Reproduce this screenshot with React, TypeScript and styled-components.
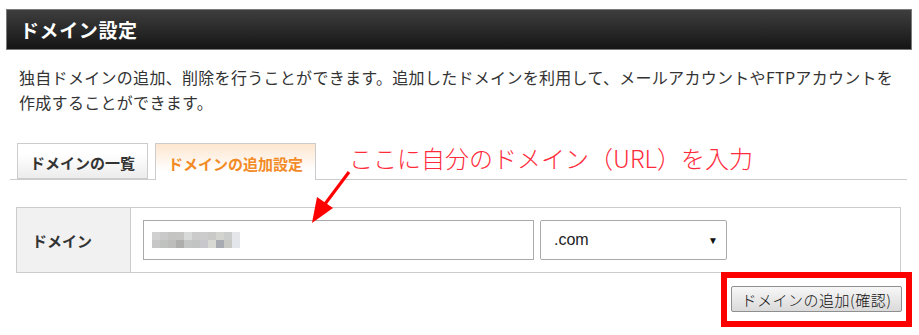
import styled, { createGlobalStyle } from "styled-components";

const GlobalStyle = createGlobalStyle`
  html, body {
    margin: 0;
    padding: 0;
    background: #fff;
  }
  body {
    font-family: "Noto Sans CJK JP", "Noto Sans", sans-serif;
    color: #333;
  }
`;

const Page = styled.div`
  position: relative;
  width: 919px;
  height: 335px;
  padding-top: 9px;
  box-sizing: border-box;
  overflow: hidden;
`;

const Header = styled.div`
  margin: 0 7px 0 6px;
  height: 41px;
  box-sizing: border-box;
  border: 1px solid #7a7a7a;
  background: linear-gradient(#3e3e3e, #151515);
  display: flex;
  align-items: center;
  padding-left: 13px;
`;

const Title = styled.h1`
  margin: 0;
  font-size: 19px;
  font-weight: 700;
  color: #fff;
  letter-spacing: 0.6px;
`;

const Desc = styled.p`
  margin: 15px 0 0 19px;
  font-size: 16px;
  line-height: 25px;
  letter-spacing: 0.3px;
  color: #333;
  white-space: nowrap;
`;

const TabBar = styled.div`
  margin: 28px 12px 0 10px;
  padding-left: 7px;
  display: flex;
  gap: 7px;
  border-bottom: 1px solid #ccc;
  height: 36px;
`;

const Tab = styled.div<{ $active?: boolean }>`
  height: ${(p) => (p.$active ? 37 : 36)}px;
  box-sizing: border-box;
  padding: 2px 12px 0;
  display: flex;
  align-items: center;
  font-size: 15px;
  font-weight: 700;
  border: 1px solid #ccc;
  border-bottom: ${(p) => (p.$active ? "none" : "1px solid #ccc")};
  color: ${(p) => (p.$active ? "#f28a26" : "#333")};
  background: ${(p) =>
    p.$active
      ? "linear-gradient(#fde6cf, #ffffff 75%)"
      : "linear-gradient(#ffffff 30%, #ececec)"};
`;

const Note = styled.div`
  position: absolute;
  left: 349px;
  top: 143px;
  font-size: 24px;
  line-height: 30px;
  font-weight: 300;
  color: #ff2b3b;
  white-space: nowrap;
`;

const Arrow = styled.svg`
  position: absolute;
  left: 300px;
  top: 165px;
`;

const Table = styled.div`
  margin: 27px 18px 0 16px;
  height: 66px;
  box-sizing: border-box;
  border: 1px solid #ccc;
  display: flex;
`;

const LabelCell = styled.div`
  width: 114px;
  background: #f1f1f1;
  border-right: 1px solid #ccc;
  display: flex;
  align-items: center;
  padding-left: 15px;
  box-sizing: border-box;
  font-size: 15px;
  font-weight: 700;
  color: #333;
`;

const FieldCell = styled.div`
  display: flex;
  align-items: center;
  gap: 6px;
  padding-left: 12px;
`;

const Input = styled.div`
  width: 391px;
  height: 40px;
  box-sizing: border-box;
  border: 1px solid #aaa;
  display: flex;
  align-items: center;
  padding-left: 8px;
`;

const Mosaic = styled.div`
  display: grid;
  grid-template-columns: repeat(11, 8px);
  grid-auto-rows: 8px;
`;

const Px = styled.div<{ $c: string }>`
  background: ${(p) => p.$c};
`;

const Select = styled.div`
  width: 187px;
  height: 40px;
  box-sizing: border-box;
  border: 1px solid #aaa;
  border-radius: 2px;
  display: flex;
  align-items: center;
  justify-content: space-between;
  padding: 0 8px 0 13px;
  font-family: "Liberation Sans", Arial, sans-serif;
  font-size: 16px;
  color: #222;
`;

const Caret = styled.span`
  font-size: 10px;
  color: #111;
`;

const ButtonRow = styled.div`
  display: flex;
  justify-content: flex-end;
  margin: -1px 7px 0 0;
`;

const Highlight = styled.div`
  border: 6px solid #ff0000;
  padding: 8px 4px 9px;
`;

const Button = styled.button`
  width: 171px;
  height: 26px;
  box-sizing: border-box;
  border: 1px solid #8f8f8f;
  border-radius: 2px;
  background: linear-gradient(#f7f7f7, #dadada);
  font-family: "Noto Sans CJK JP", sans-serif;
  font-size: 15px;
  font-weight: 300;
  color: #111;
  padding: 0;
  display: flex;
  align-items: center;
  justify-content: center;
  letter-spacing: 0.5px;
`;

const mosaic = [
  "#cfd0cf", "#c8c9c8", "#c4c4c2", "#c5c6c3", "#d8dada", "#cbcbcb", "#cccccc", "#c9cac8", "#d3d4d0", "#cbcdcc", "#e4e6ea",
  "#c6c7c6", "#c0c2c0", "#bdbdbb", "#aeafac", "#c4c6c6", "#c2c4c4", "#c8c8cc", "#d8d9d3", "#a8acb2", "#c8c9c5", "#e3e6eb",
];

export default function App() {
  return (
    <Page>
      <GlobalStyle />
      <Header>
        <Title>ドメイン設定</Title>
      </Header>
      <Desc>
        独自ドメインの追加、削除を行うことができます。追加したドメインを利用して、メールアカウントやFTPアカウントを
        <br />
        作成することができます。
      </Desc>
      <TabBar>
        <Tab>ドメインの一覧</Tab>
        <Tab $active>ドメインの追加設定</Tab>
      </TabBar>
      <Table>
        <LabelCell>ドメイン</LabelCell>
        <FieldCell>
          <Input>
            <Mosaic>
              {mosaic.map((c, i) => (
                <Px key={i} $c={c} />
              ))}
            </Mosaic>
          </Input>
          <Select>
            .com
            <Caret>▼</Caret>
          </Select>
        </FieldCell>
      </Table>
      <ButtonRow>
        <Highlight>
          <Button>ドメインの追加(確認)</Button>
        </Highlight>
      </ButtonRow>

      <Note>ここに自分のドメイン（URL）を入力</Note>
      <Arrow width="60" height="65" viewBox="300 165 60 65">
        <line x1="349" y1="172" x2="322" y2="208" stroke="#ff0000" strokeWidth="3.2" />
        <polygon points="312,223 317,197 333,208" fill="#ff0000" />
      </Arrow>
    </Page>
  );
}
